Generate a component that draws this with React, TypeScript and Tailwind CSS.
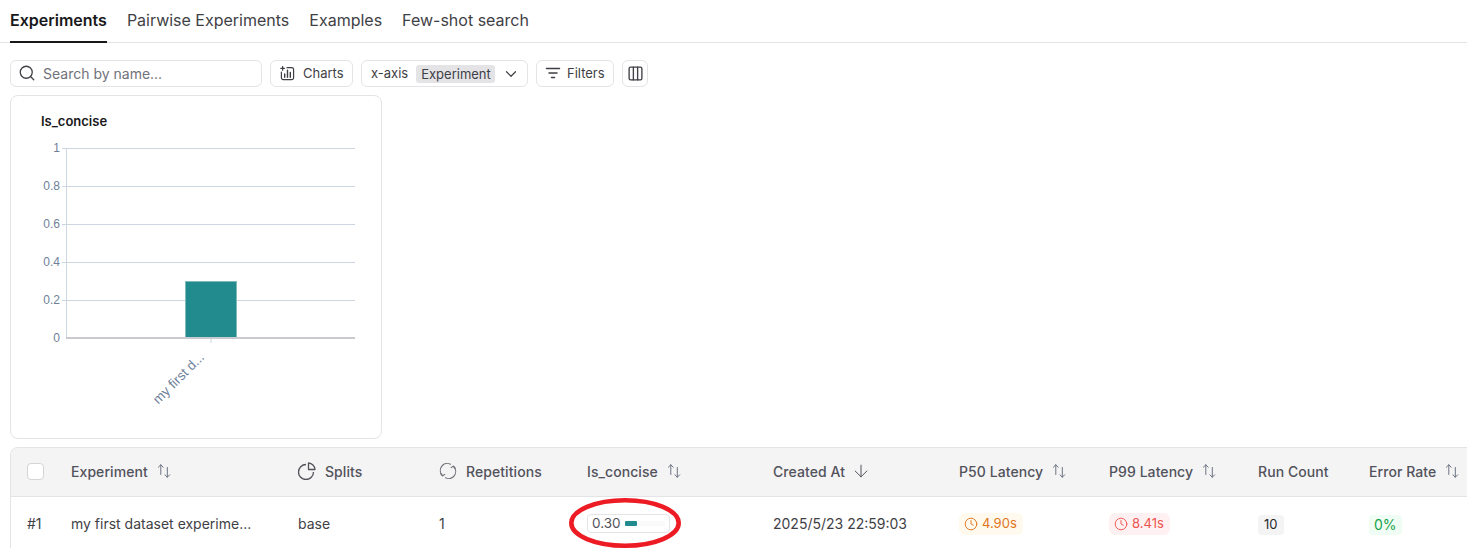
import React from "react";
import { Search, ChevronDown, Columns3, ArrowDown, Clock } from "lucide-react";

const SortIcon = () => (
  <svg width="14" height="14" viewBox="0 0 14 14" fill="none" stroke="#6b7280" strokeWidth="1" strokeLinecap="round" strokeLinejoin="round" className="shrink-0">
    <path d="M3.8 10.5V.8M1.4 3.2 3.8.8l2.4 2.4" />
    <path d="M10.3 3.5v9.7M7.9 10.8l2.4 2.4 2.4-2.4" />
  </svg>
);

const ChartsIcon = () => (
  <svg width="15" height="15" viewBox="0 0 16 16" fill="none" stroke="#3f3f46" strokeWidth="1.3" strokeLinecap="round" strokeLinejoin="round">
    <path d="M4.8 2.5H.8M2.8.6v3.8" />
    <path d="M7.5 1.8h5a2 2 0 0 1 2 2v8.7a2 2 0 0 1-2 2h-9a2 2 0 0 1-2-2V6.5" />
    <path d="M5 12V8.5M8 12V4.5M11 12V7" strokeWidth="1.5" />
  </svg>
);

const FilterIcon = () => (
  <svg width="16" height="16" viewBox="0 0 16 16" fill="none" stroke="#3f3f46" strokeWidth="1.5" strokeLinecap="round">
    <path d="M1.5 2.5h13M4 7h8M6.5 11.5h3" />
  </svg>
);

const PieIcon = () => (
  <svg width="18" height="18" viewBox="0 0 18 18" fill="none" stroke="#52525b" strokeWidth="1.3" strokeLinejoin="round" className="shrink-0">
    <path d="M8 2.5A7.5 7.5 0 1 0 15.5 10" />
    <path d="M10.5 1A7 7 0 0 1 17 7.5H10.5Z" />
  </svg>
);

const RepeatIcon = () => (
  <svg width="18" height="18" viewBox="0 0 18 18" fill="none" stroke="#71717a" strokeWidth="1.1" strokeLinecap="round" strokeLinejoin="round" className="shrink-0">
    <path d="M11.5 2.2A7 7 0 0 0 3.5 13.5" />
    <path d="M1.6 11.6 3.5 14l2.3-1.6" />
    <path d="M6.5 15.8A7 7 0 0 0 14.5 4.5" />
    <path d="M16.4 6.4 14.5 4l-2.3 1.6" />
  </svg>
);

const Hd = ({ children, sort = true, icon, gap = "gap-[9px]" }: { children: React.ReactNode; sort?: boolean; icon?: React.ReactNode; gap?: string }) => (
  <div className={`flex items-center ${gap} pb-[2px] pl-4 text-[14px] font-medium tracking-[0.07px] text-[#52525b] whitespace-nowrap`}>
    {icon}
    <span>{children}</span>
    {sort && <SortIcon />}
  </div>
);

const Cell = ({ children }: { children: React.ReactNode }) => (
  <div className="flex items-center pl-4 text-[14px] text-[#3f3f46] whitespace-nowrap">{children}</div>
);

const Chart = () => {
  const ys = [
    ["1", 148],
    ["0.8", 186],
    ["0.6", 224],
    ["0.4", 262],
    ["0.2", 300],
    ["0", 338],
  ] as const;
  return (
    <svg width="344" height="290" viewBox="26 140 344 290" className="block" style={{ fontFamily: '"Liberation Sans", sans-serif' }}>
      {ys.slice(0, 5).map(([, y]) => (
        <line key={y} x1="62" x2="355" y1={y + 0.5} y2={y + 0.5} stroke="#ccd6e0" strokeWidth="1" />
      ))}
      <line x1="66.5" x2="66.5" y1="148" y2="338" stroke="#ccd6e0" />
      {ys.map(([t, y]) => (
        <text key={t} x="60" y={y + 4} textAnchor="end" fontSize="12" fill="#6e7f99">{t}</text>
      ))}
      <rect x="185.5" y="281.5" width="51" height="56.5" fill="#228b8d" stroke="#7fb9ba" strokeWidth="1" />
      <line x1="66" x2="355" y1="338" y2="338" stroke="#c8cad0" strokeWidth="2" />
      <line x1="211" x2="211" y1="339" y2="343" stroke="#ccd6e0" />
      <text x="0" y="0" fontSize="13.5" fill="#6e7f99" textAnchor="end" transform="translate(205 358) rotate(-45)">my first d...</text>
    </svg>
  );
};

export default function App() {
  const cols = "grid-cols-[44px_227px_141px_148px_186px_186px_150px_149px_111px_200px]";
  return (
    <div className="h-[548px] w-[1467px] overflow-hidden bg-white text-[#18181b]" style={{ fontFamily: 'Inter, "Noto Sans", sans-serif' }}>
      <div className="flex h-[43px] gap-5 border-b border-[#e4e4e7] px-[10px] text-[16px]">
        <div className="flex h-[43px] items-center border-b-2 border-[#18181b] pb-[3px] pt-[1px] font-semibold">Experiments</div>
        <div className="flex h-[42px] items-center pb-[3px] text-[#3f3f46]">Pairwise Experiments</div>
        <div className="flex h-[42px] items-center pb-[3px] text-[#3f3f46]">Examples</div>
        <div className="flex h-[42px] items-center pb-[3px] text-[#3f3f46]">Few-shot search</div>
      </div>

      <div className="mt-[17px] flex h-[27px] items-center gap-2 px-[10px] text-[13px] text-[#3f3f46]">
        <div className="flex h-[27px] w-[252px] items-center gap-[7px] rounded-md border border-[#e4e4e7] pb-[1px] pl-[7px] text-[14px] text-[#71717a]">
          <Search size={18} className="text-[#3f3f46]" strokeWidth={1.7} />
          <span>Search by name...</span>
        </div>
        <div className="flex h-[27px] w-[83px] items-center gap-[8px] rounded-md border border-[#e4e4e7] pl-[9px]">
          <ChartsIcon />
          <span>Charts</span>
        </div>
        <div className="flex h-[27px] w-[167px] items-center rounded-md border border-[#e4e4e7] pl-[9px]">
          <span>x-axis</span>
          <span className="ml-[8px] rounded-[3px] bg-[#e4e4e7] pl-[5px] pr-[4px] leading-[18px]">Experiment</span>
          <ChevronDown size={18} className="ml-[7px]" strokeWidth={1.6} />
        </div>
        <div className="flex h-[27px] w-[78px] items-center gap-[6px] rounded-md border border-[#e4e4e7] pl-[8px]">
          <FilterIcon />
          <span>Filters</span>
        </div>
        <div className="flex h-[27px] w-[26px] items-center justify-center rounded-md border border-[#e4e4e7]">
          <Columns3 size={17} strokeWidth={1.9} />
        </div>
      </div>

      <div className="ml-[10px] mt-[8px] h-[344px] w-[372px] rounded-lg border border-[#e4e4e7] bg-white pl-[15px]">
        <div className="pl-[15px] pt-[17px] text-[13px] font-semibold leading-[16px] text-[#18181b]">Is_concise</div>
        <div className="mt-[11px]">
          <Chart />
        </div>
      </div>

      <div className="ml-[10px] mt-[8px] overflow-hidden rounded-tl-lg border-l border-t border-[#e4e4e7]">
        <div className={`grid h-[49px] ${cols} border-b border-[#e4e4e7] bg-[#f4f4f5]`}>
          <div className="flex items-center pb-[2px] pl-4">
            <div className="h-[17px] w-[17px] rounded-[4px] border border-[#d4d4d8] bg-white" />
          </div>
          <Hd>Experiment</Hd>
          <Hd sort={false} icon={<PieIcon />}>Splits</Hd>
          <Hd sort={false} icon={<RepeatIcon />}>Repetitions</Hd>
          <Hd>Is_concise</Hd>
          <Hd sort={false}>
            <span className="inline-flex items-center gap-[6px]">Created At <ArrowDown size={20} strokeWidth={1.2} className="text-[#52525b]" /></span>
          </Hd>
          <Hd>P50 Latency</Hd>
          <Hd>P99 Latency</Hd>
          <Hd sort={false}>Run Count</Hd>
          <Hd>Error Rate</Hd>
        </div>
        <div className={`grid h-[52px] ${cols}`}>
          <Cell>#1</Cell>
          <Cell>my first dataset experime...</Cell>
          <Cell>base</Cell>
          <Cell>1</Cell>
          <Cell>
            <div className="relative mt-[1px] flex h-[19px] w-[83px] items-center rounded border border-[#e4e4e7] pl-[4px] text-[13.5px] text-[#52525b]">
              0.30
              <div className="ml-[4px] h-[5px] w-[40px] bg-[#fafafa]">
                <div className="h-[5px] w-[12px] rounded-[1px] bg-[#228b8d]" />
              </div>
              <svg width="112" height="50" viewBox="0 0 112 50" className="absolute left-[-19px] top-[-17px]" fill="none">
                <ellipse cx="56" cy="25" rx="53.7" ry="22.7" stroke="#ed1c24" strokeWidth="4.6" />
              </svg>
            </div>
          </Cell>
          <Cell>2025/5/23 22:59:03</Cell>
          <Cell>
            <span className="mt-[2px] flex h-[22px] items-center gap-[4px] rounded-[6px] bg-[#fff9ee] pl-[5px] pr-[6px] text-[13px] text-[#e0761c]">
              <Clock size={14} strokeWidth={1.6} />4.90s
            </span>
          </Cell>
          <Cell>
            <span className="mt-[2px] flex h-[22px] items-center gap-[4px] rounded-[6px] bg-[#fff1f2] pl-[5px] pr-[6px] text-[13px] text-[#ef5350]">
              <Clock size={14} strokeWidth={1.6} />8.41s
            </span>
          </Cell>
          <Cell>
            <span className="mt-[3px] flex h-[20px] items-center rounded-[4px] bg-[#f4f4f5] px-[6px] text-[13px] text-[#27272a]">10</span>
          </Cell>
          <Cell>
            <span className="mt-[3px] flex h-[20px] items-center rounded-[4px] bg-[#f0fdf4] px-[5px] text-[#16a34a]">0%</span>
          </Cell>
        </div>
      </div>
    </div>
  );
}
